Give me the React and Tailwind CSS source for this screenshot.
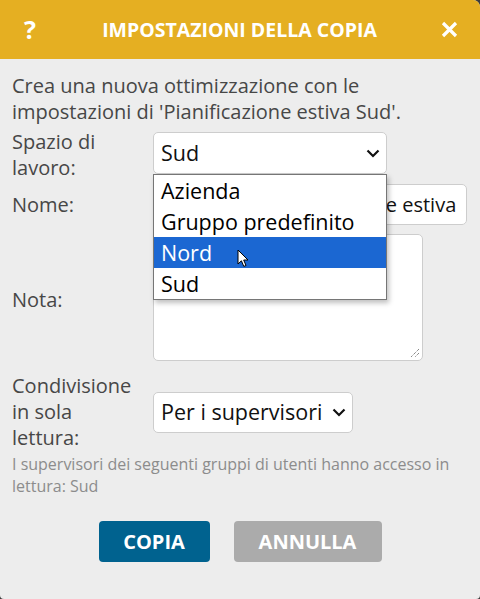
import React from "react";

const Chevron = () => (
  <svg width="14" height="9" viewBox="0 0 14 9">
    <path d="M1.5 1.5 L7 7 L12.5 1.5" fill="none" stroke="#111" strokeWidth="2.2" />
  </svg>
);

const Cursor = () => (
  <svg width="13" height="19" viewBox="0 0 13 19" className="absolute left-[83px] top-[12px]">
    <path d="M1 1 L1 15 L4.4 11.8 L6.8 17.4 L9 16.5 L6.7 11 L11 11 Z" fill="#fff" stroke="#000" strokeWidth="1" strokeLinejoin="round" />
  </svg>
);

const options = ["Azienda", "Gruppo predefinito", "Nord", "Sud"];

export default function App() {
  return (
    <div className="w-[480px] h-[599px] bg-[#3c3c3c] font-['Open_Sans',sans-serif]">
      <div className="w-full h-full bg-[#ededed] rounded-tr-[7px] rounded-b-[4px] overflow-hidden flex flex-col">
        {/* Header */}
        <div className="h-[59px] bg-[#e5af22] flex items-center justify-between pl-[24px] pr-[22px] text-white shrink-0">
          <span className="text-[25px] font-bold leading-none w-[12px]">?</span>
          <span className="text-[19.5px] font-bold ml-[2px]">IMPOSTAZIONI DELLA COPIA</span>
          <svg width="17" height="17" viewBox="0 0 17 17">
            <path d="M2 2 L15 15 M15 2 L2 15" stroke="#fff" strokeWidth="3.2" />
          </svg>
        </div>

        {/* Body */}
        <div className="px-3 pt-[14px] text-[#474747]">
          <p className="text-[20px] leading-[26px]">
            Crea una nuova ottimizzazione con le impostazioni di 'Pianificazione estiva Sud'.
          </p>

          {/* Spazio di lavoro */}
          <div className="flex items-start mt-[4px]">
            <div className="w-[141px] text-[20px] leading-[26px]">Spazio di<br />lavoro:</div>
            <div className="relative mt-[3px]">
              <div className="w-[234px] h-[42px] bg-white border border-[#cdcdcd] rounded-[5px] flex items-center justify-between pl-[7px] pr-[6px] text-[21.5px] text-[#111]">
                <span>Sud</span>
                <Chevron />
              </div>
              <div className="absolute left-0 top-[42px] w-[234px] bg-white border border-[#767676] shadow-[2px_3px_5px_rgba(0,0,0,0.25)] z-10 text-[21.5px] text-black">
                {options.map((o) => (
                  <div
                    key={o}
                    className={
                      o === "Nord"
                        ? "relative h-[31px] leading-[31px] pl-[7px] bg-[#1b67d2] text-white"
                        : "h-[31px] leading-[31px] pl-[7px]"
                    }
                  >
                    {o}
                    {o === "Nord" && <Cursor />}
                  </div>
                ))}
              </div>
            </div>
          </div>

          {/* Nome */}
          <div className="flex items-center mt-[3px]">
            <div className="w-[141px] text-[20px] leading-[26px]">Nome:</div>
            <div className="w-[314px] h-[41px] bg-white border border-[#cdcdcd] rounded-[5px] flex items-center pl-[7px] pr-[4px] text-[20px] text-[#111]">
              <div className="overflow-hidden whitespace-nowrap">Copia della Pianificazione estiva Sud</div>
            </div>
          </div>

          {/* Nota */}
          <div className="flex items-center mt-[9px]">
            <div className="w-[141px] text-[20px] leading-[26px] mt-[5px]">Nota:</div>
            <div className="relative w-[270px] h-[127px] bg-white border border-[#cdcdcd] rounded-[5px]">
              <svg width="10" height="10" viewBox="0 0 10 10" className="absolute right-[2px] bottom-[2px]">
                <path d="M9 1 L1 9 M9 5 L5 9" stroke="#555" strokeWidth="1" strokeDasharray="1 1" />
              </svg>
            </div>
          </div>

          {/* Condivisione */}
          <div className="flex items-center mt-[12px]">
            <div className="w-[141px] text-[20px] leading-[26px]">Condivisione<br />in sola<br />lettura:</div>
            <div className="w-[200px] h-[41px] bg-white border border-[#cdcdcd] rounded-[5px] flex items-center justify-between pl-[7px] pr-[6px] text-[21.5px] text-[#111]">
              <span>Per i supervisori</span>
              <Chevron />
            </div>
          </div>

          <p className="text-[16px] leading-[22px] text-[#8c8c8c] mt-[2px]">
            I supervisori dei seguenti gruppi di utenti hanno accesso in lettura: Sud
          </p>

          {/* Buttons */}
          <div className="flex justify-center gap-6 mt-[24px]">
            <button className="w-[111px] h-[41px] bg-[#00628f] text-white font-bold text-[20px] rounded-[4px]">
              COPIA
            </button>
            <button className="w-[148px] h-[41px] bg-[#ababab] text-white font-bold text-[20px] rounded-[4px]">
              ANNULLA
            </button>
          </div>
        </div>
      </div>
    </div>
  );
}
